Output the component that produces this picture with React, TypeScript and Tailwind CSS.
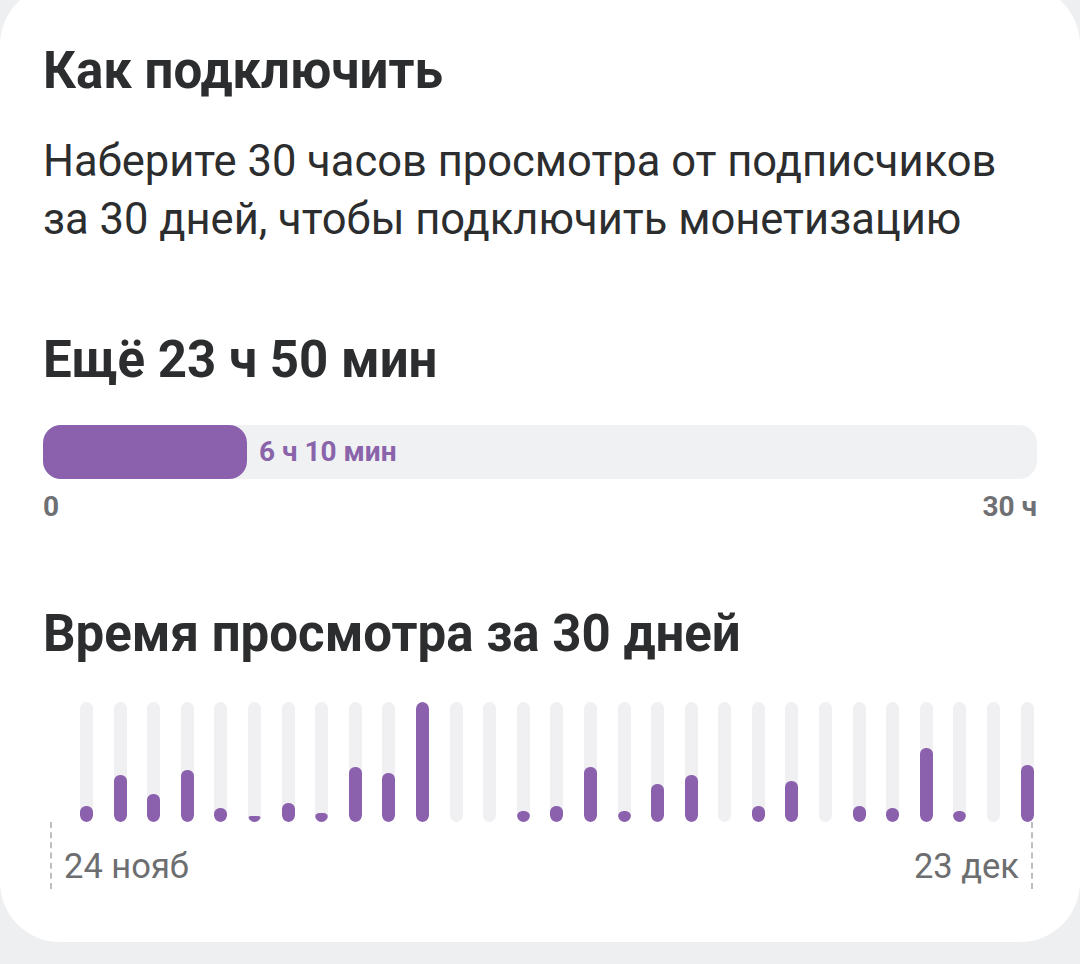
import React from "react";

const bars = [
  16.5, 47, 28, 52, 14, 6, 19, 8.6, 55, 49.5, 120, 0, 0, 11, 16.5, 55, 11, 38, 47, 0, 16.5, 41, 0, 16.5, 14, 74, 11,
  0, 57,
];

const App = () => {
  return (
    <div className="min-h-screen bg-[#eeeff1] overflow-hidden" style={{ fontFamily: "Roboto, 'Noto Sans', sans-serif" }}>
      <div className="-mt-[15px] bg-white rounded-[60px] px-[43px] pt-[56px] pb-[53px] text-[#2c2d2e]">
        <h1 className="text-[51px] leading-[60px] font-bold">Как подключить</h1>
        <p className="mt-[32px] text-[43.5px] leading-[58px]">
          Наберите 30 часов просмотра от подписчиков
          <br />
          за 30 дней, чтобы подключить монетизацию
        </p>

        <h2 className="mt-[81px] text-[51px] leading-[60px] font-bold">Ещё 23 ч 50 мин</h2>
        <div className="mt-[35px] h-[54px] rounded-[18px] bg-[#f0f1f3] flex items-center">
          <div className="h-full w-[204px] rounded-[18px] bg-[#8b61ad]" />
          <span className="ml-[12px] text-[28px] font-bold text-[#8a64aa]">6 ч 10 мин</span>
        </div>
        <div className="mt-[11px] flex justify-between text-[28px] leading-[34px] font-bold text-[#6f7073]">
          <span>0</span>
          <span>30 ч</span>
        </div>

        <h2 className="mt-[80px] text-[51px] leading-[60px] font-bold">Время просмотра за 30 дней</h2>
        <div className="mt-[38px] ml-[37px] w-[954px] flex justify-between">
          {bars.map((h, i) => (
            <div key={i} className="w-[13px] h-[120px] rounded-[7px] bg-[#f0f0f2] flex flex-col justify-end overflow-hidden">
              {h > 0 && <div className="w-full rounded-[6px] bg-[#8b61ad]" style={{ height: h }} />}
            </div>
          ))}
        </div>
        <div className="ml-[7px] mr-[4px] flex justify-between text-[34.5px] leading-[40px] text-[#6d6e70]">
          <div className="flex">
            <div className="h-[67px] border-l-2 border-dashed border-[#bdbec1]" />
            <span className="ml-[12px] pt-[24px]">24 нояб</span>
          </div>
          <div className="flex">
            <span className="mr-[12px] pt-[24px]">23 дек</span>
            <div className="h-[67px] border-l-2 border-dashed border-[#bdbec1]" />
          </div>
        </div>
      </div>
    </div>
  );
};

export default App;
